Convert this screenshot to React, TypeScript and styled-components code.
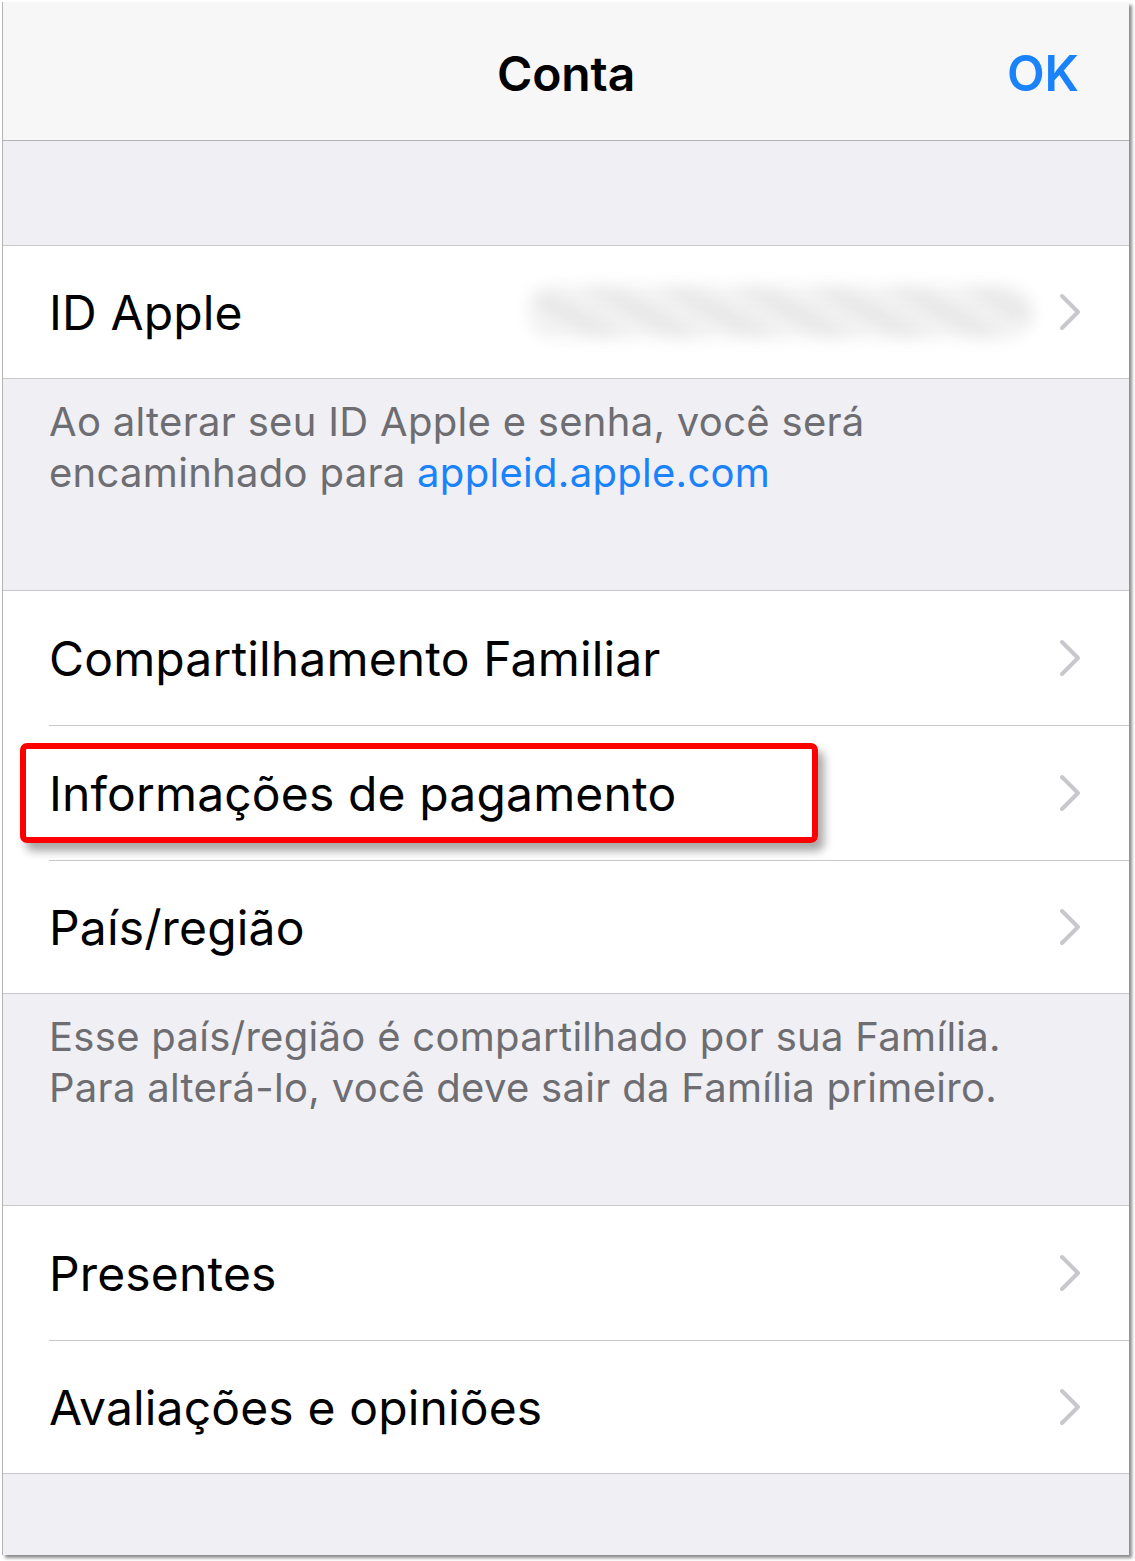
import * as React from 'react';
import styled, { createGlobalStyle } from 'styled-components';

const GlobalStyle = createGlobalStyle`
  html, body {
    margin: 0;
    padding: 0;
    background: #ffffff;
  }
  body {
    font-family: Inter, "Noto Sans", "Liberation Sans", sans-serif;
    -webkit-font-smoothing: antialiased;
  }
`;

const Page = styled.div`
  width: 1135px;
  height: 1561px;
  padding: 2px 0 0 2px;
  box-sizing: border-box;
  background: #ffffff;
`;

const Screen = styled.div`
  width: 1127px;
  height: 1553px;
  box-sizing: border-box;
  border-left: 1px solid #b4b4b4;
  background: #efeff4;
  box-shadow: 3px 3px 3px rgba(0, 0, 0, 0.45);
  display: flex;
  flex-direction: column;
  overflow: hidden;
`;

const NavBar = styled.header`
  height: 138px;
  flex-shrink: 0;
  box-sizing: content-box;
  display: grid;
  grid-template-columns: 1fr auto 1fr;
  align-items: center;
  padding: 0 50px;
  background: #f7f7f8;
  border-bottom: 1px solid #b2b2b2;
`;

const Title = styled.h1`
  grid-column: 2;
  margin: 4px 0 0;
  font-size: 48px;
  font-weight: 600;
  color: #000;
  letter-spacing: -0.1px;
`;

const Done = styled.span`
  grid-column: 3;
  justify-self: end;
  margin-top: 4px;
  font-size: 49px;
  font-weight: 600;
  color: #1a82fb;
`;

const Spacer = styled.div<{ $h: number }>`
  height: ${p => p.$h}px;
  flex-shrink: 0;
`;

const Group = styled.section`
  background: #ffffff;
  border-top: 1px solid #c8c7cc;
  border-bottom: 1px solid #c8c7cc;
  padding-left: 46px;
`;

const Row = styled.div<{ $last?: boolean }>`
  position: relative;
  height: ${p => (p.$last ? 132 : 134)}px;
  display: flex;
  align-items: center;
  padding-right: 46px;
  border-bottom: ${p => (p.$last ? 'none' : '1px solid #c8c7cc')};
`;

const Label = styled.span`
  flex: 1;
  font-size: 48px;
  color: #000;
  letter-spacing: 0.15px;
  white-space: nowrap;
`;

const Hidden = styled.div`
  width: 505px;
  height: 52px;
  margin-right: 24px;
  border-radius: 30px;
  background: repeating-linear-gradient(
    30deg,
    #dedede 0px,
    #eaeaea 14px,
    #f3f3f3 26px,
    #e0e0e0 38px
  );
  filter: blur(8px);
  opacity: 0.8;
`;

const Highlight = styled.div`
  position: absolute;
  left: -29px;
  top: 17px;
  width: 786px;
  height: 88px;
  border: 6px solid #ff0000;
  border-radius: 7px;
  box-shadow: 6px 8px 10px rgba(0, 0, 0, 0.35);
  pointer-events: none;
`;

const Footer = styled.div<{ $h: number }>`
  height: ${p => p.$h}px;
  flex-shrink: 0;
  padding: 17px 40px 0 46px;
  box-sizing: border-box;
  font-size: 40px;
  line-height: 51px;
  letter-spacing: 0.3px;
  color: #6d6d72;
  white-space: nowrap;
`;

const Link = styled.span`
  color: #1a82fb;
`;

const Chevron: React.FC = () => (
  <svg width="26" height="40" viewBox="0 0 26 40">
    <path
      d="M5 4 L21 20 L5 36"
      fill="none"
      stroke="#c7c7cc"
      strokeWidth="4"
      strokeLinecap="round"
      strokeLinejoin="round"
    />
  </svg>
);

export default function App() {
  return (
    <Page>
      <GlobalStyle />
      <Screen>
        <NavBar>
          <Title>Conta</Title>
          <Done>OK</Done>
        </NavBar>

        <Spacer $h={104} />

        <Group>
          <Row $last>
            <Label>ID Apple</Label>
            <Hidden />
            <Chevron />
          </Row>
        </Group>

        <Footer $h={211}>
          Ao alterar seu ID Apple e senha, você será
          <br />
          encaminhado para <Link>appleid.apple.com</Link>
        </Footer>

        <Group>
          <Row>
            <Label>Compartilhamento Familiar</Label>
            <Chevron />
          </Row>
          <Row>
            <Label>Informações de pagamento</Label>
            <Chevron />
            <Highlight />
          </Row>
          <Row $last>
            <Label>País/região</Label>
            <Chevron />
          </Row>
        </Group>

        <Footer $h={211}>
          Esse país/região é compartilhado por sua Família.
          <br />
          Para alterá-lo, você deve sair da Família primeiro.
        </Footer>

        <Group>
          <Row>
            <Label>Presentes</Label>
            <Chevron />
          </Row>
          <Row $last>
            <Label>Avaliações e opiniões</Label>
            <Chevron />
          </Row>
        </Group>
      </Screen>
    </Page>
  );
}
